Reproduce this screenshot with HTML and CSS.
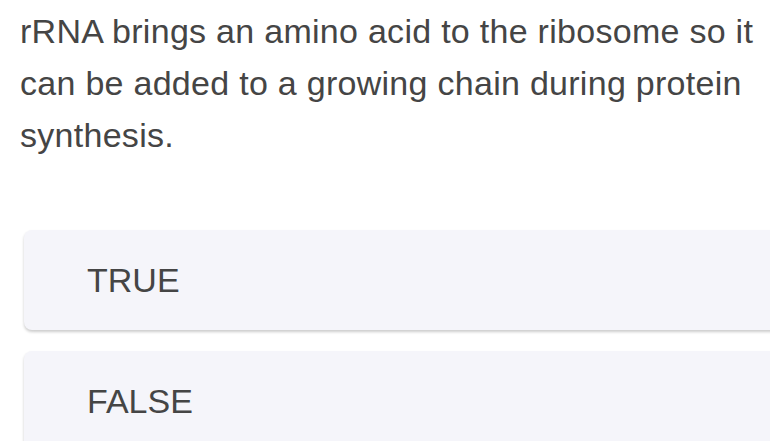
FILE: index.html
```html
<!DOCTYPE html>
<html lang="en">
<head>
<meta charset="utf-8">
<title>Question</title>
<link rel="stylesheet" href="styles.css">
</head>
<body>
<div class="page">
  <p class="question">rRNA brings an amino acid to the ribosome so it can be added to a growing chain during protein synthesis.</p>
  <div class="options">
    <div class="option"><span class="label">TRUE</span></div>
    <div class="option"><span class="label">FALSE</span></div>
  </div>
</div>
</body>
</html>
```
FILE: styles.css
```css
html, body {
  margin: 0;
  padding: 0;
  background: #ffffff;
  overflow: hidden;
}
.page {
  width: 770px;
  height: 441px;
  overflow: hidden;
  font-family: "Liberation Sans", Arial, sans-serif;
  color: #454545;
}
.question {
  margin: 5px 0 0 0;
  padding: 0 8px 0 20px;
  font-size: 34px;
  line-height: 52px;
  letter-spacing: 0.28px;
}
.options {
  margin-top: 69px;
  display: flex;
  flex-direction: column;
  gap: 21px;
  padding-left: 24px;
}
.option {
  width: 800px;
  height: 100px;
  box-sizing: border-box;
  background: #f5f5fa;
  border-radius: 8px;
  box-shadow: 0 2px 3px rgba(0, 0, 0, 0.2);
  display: flex;
  align-items: center;
  padding-left: 63px;
}
.label {
  font-size: 34px;
  color: #454545;
}
```
